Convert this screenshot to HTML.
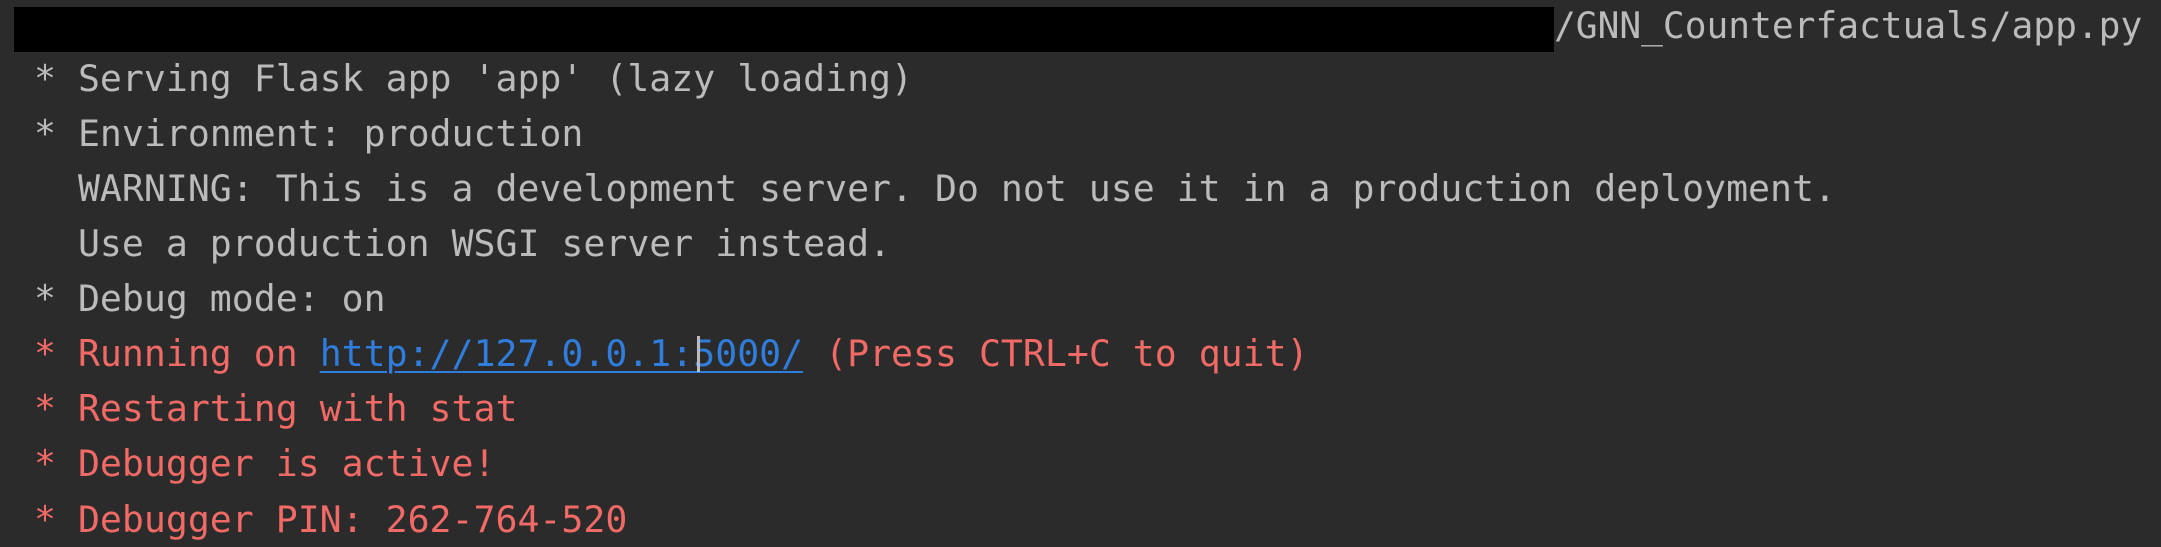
<!DOCTYPE html>
<html><head><meta charset="utf-8"><style>
html,body{margin:0;padding:0;}
body{width:2161px;height:542px;background:#2b2b2b;position:relative;overflow:hidden;
font-family:"DejaVu Sans Mono","Liberation Mono",monospace;font-size:36.5px;color:#bbbbbb;}
.l{position:absolute;left:34px;height:55px;line-height:55px;white-space:pre;}
.r{color:#f16a66;}
.a{color:#2f7ddc;text-decoration:underline;text-decoration-thickness:2px;text-underline-offset:5px;position:relative;}
.cur{position:absolute;top:10px;width:3px;height:36px;background:#bbbbbb;}
</style></head><body>
<div style="position:absolute;left:14px;top:7px;width:1540px;height:45px;background:#000"></div>
<div class="l" style="left:1554px;top:-2px;font-size:36.2px">/GNN_Counterfactuals/app.py</div>
<div class="l" style="top:51px">* Serving Flask app 'app' (lazy loading)</div>
<div class="l" style="top:106px">* Environment: production</div>
<div class="l" style="top:161px">  WARNING: This is a development server. Do not use it in a production deployment.</div>
<div class="l" style="top:216px">  Use a production WSGI server instead.</div>
<div class="l" style="top:271px">* Debug mode: on</div>
<div class="l r" style="top:326px">* Running on <span class="a">http://127.0.0.1:5000/</span> (Press CTRL+C to quit)</div>
<div class="cur" style="left:697px;top:336px"></div>
<div class="l r" style="top:381px">* Restarting with stat</div>
<div class="l r" style="top:436px">* Debugger is active!</div>
<div class="l r" style="top:492px">* Debugger PIN: 262-764-520</div>
</body></html>
